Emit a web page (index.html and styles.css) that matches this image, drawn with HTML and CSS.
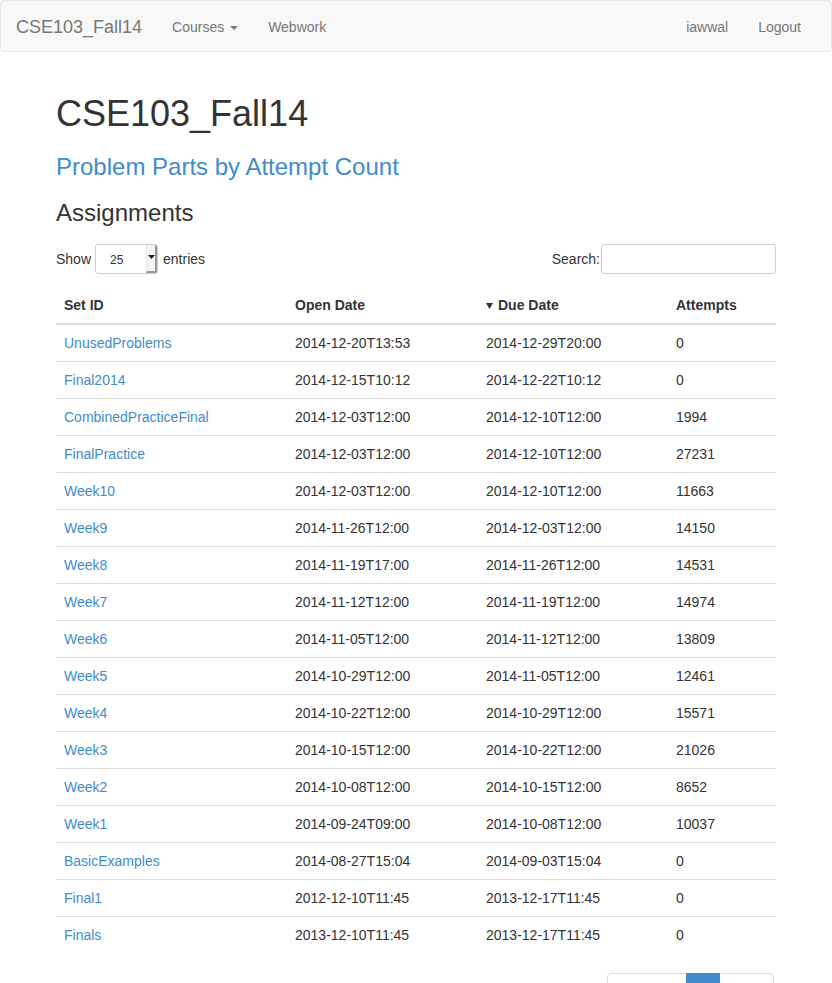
FILE: index.html
```
<!DOCTYPE html>
<html>
<head>
<meta charset="utf-8">
<title>CSE103_Fall14</title>
<link rel="stylesheet" href="styles.css">
</head>
<body>
<nav class="navbar">
  <div class="nav-left">
    <a class="brand" href="#">CSE103_Fall14</a>
    <a class="nav-link" href="#">Courses <span class="caret"></span></a>
    <a class="nav-link" href="#">Webwork</a>
  </div>
  <div class="nav-right">
    <a class="nav-link" href="#">iawwal</a>
    <a class="nav-link" href="#">Logout</a>
  </div>
</nav>
<main class="container">
  <h1>CSE103_Fall14</h1>
  <h3 class="subtitle">Problem Parts by Attempt Count</h3>
  <h3>Assignments</h3>
  <div class="tools">
    <div class="length">Show <span class="select"><span class="select-val">25</span><span class="select-arrow"><svg width="7" height="4" viewBox="0 0 7 4"><path d="M0 0H7L3.5 4Z" fill="#222"/></svg></span></span> entries</div>
    <div class="search">Search:<span class="input"></span></div>
  </div>
  <table class="table">
    <thead>
      <tr><th class="c1">Set ID</th><th class="c2">Open Date</th><th class="c3"><svg class="sort" width="7" height="6" viewBox="0 0 7 6"><path d="M0 0H7L3.5 6Z" fill="#333"/></svg>Due Date</th><th class="c4">Attempts</th></tr>
    </thead>
    <tbody>
      <tr><td><a href="#">UnusedProblems</a></td><td>2014-12-20T13:53</td><td>2014-12-29T20:00</td><td>0</td></tr>
      <tr><td><a href="#">Final2014</a></td><td>2014-12-15T10:12</td><td>2014-12-22T10:12</td><td>0</td></tr>
      <tr><td><a href="#">CombinedPracticeFinal</a></td><td>2014-12-03T12:00</td><td>2014-12-10T12:00</td><td>1994</td></tr>
      <tr><td><a href="#">FinalPractice</a></td><td>2014-12-03T12:00</td><td>2014-12-10T12:00</td><td>27231</td></tr>
      <tr><td><a href="#">Week10</a></td><td>2014-12-03T12:00</td><td>2014-12-10T12:00</td><td>11663</td></tr>
      <tr><td><a href="#">Week9</a></td><td>2014-11-26T12:00</td><td>2014-12-03T12:00</td><td>14150</td></tr>
      <tr><td><a href="#">Week8</a></td><td>2014-11-19T17:00</td><td>2014-11-26T12:00</td><td>14531</td></tr>
      <tr><td><a href="#">Week7</a></td><td>2014-11-12T12:00</td><td>2014-11-19T12:00</td><td>14974</td></tr>
      <tr><td><a href="#">Week6</a></td><td>2014-11-05T12:00</td><td>2014-11-12T12:00</td><td>13809</td></tr>
      <tr><td><a href="#">Week5</a></td><td>2014-10-29T12:00</td><td>2014-11-05T12:00</td><td>12461</td></tr>
      <tr><td><a href="#">Week4</a></td><td>2014-10-22T12:00</td><td>2014-10-29T12:00</td><td>15571</td></tr>
      <tr><td><a href="#">Week3</a></td><td>2014-10-15T12:00</td><td>2014-10-22T12:00</td><td>21026</td></tr>
      <tr><td><a href="#">Week2</a></td><td>2014-10-08T12:00</td><td>2014-10-15T12:00</td><td>8652</td></tr>
      <tr><td><a href="#">Week1</a></td><td>2014-09-24T09:00</td><td>2014-10-08T12:00</td><td>10037</td></tr>
      <tr><td><a href="#">BasicExamples</a></td><td>2014-08-27T15:04</td><td>2014-09-03T15:04</td><td>0</td></tr>
      <tr><td><a href="#">Final1</a></td><td>2012-12-10T11:45</td><td>2013-12-17T11:45</td><td>0</td></tr>
      <tr><td><a href="#">Finals</a></td><td>2013-12-10T11:45</td><td>2013-12-17T11:45</td><td>0</td></tr>
    </tbody>
  </table>
  <div class="footer-row">
    <div class="info">Showing 1 to 17 of 17 entries</div>
    <ul class="pagination">
      <li class="disabled"><a href="#">Previous</a></li>
      <li class="active"><a href="#">1</a></li>
      <li class="disabled"><a href="#">Next</a></li>
    </ul>
  </div>
</main>
</body>
</html>
```

FILE: styles.css
```
* { box-sizing: border-box; }
html, body { margin: 0; padding: 0; }
body {
  font-family: "Liberation Sans", Arial, sans-serif;
  font-size: 14px;
  line-height: 20px;
  color: #333;
  background: #fff;
}
a { color: #428bca; text-decoration: none; }

.navbar {
  height: 52px;
  background: #f8f8f8;
  border: 1px solid #e7e7e7;
  border-radius: 4px;
  display: flex;
  justify-content: space-between;
  align-items: stretch;
  margin-bottom: 20px;
}
.nav-left, .nav-right { display: flex; align-items: stretch; }
.brand {
  font-size: 18px;
  line-height: 20px;
  color: #777;
  padding: 16px 15px 14px;
}
.nav-link {
  color: #777;
  padding: 16px 15px 14px;
  line-height: 20px;
}
.nav-right { margin-right: 15px; }
.caret {
  display: inline-block;
  width: 0; height: 0;
  margin-left: 2px;
  vertical-align: middle;
  border-top: 4px solid #777;
  border-left: 4px solid transparent;
  border-right: 4px solid transparent;
}

.container {
  width: 750px;
  margin: 0 auto;
  padding: 2px 15px 0;
}
h1 {
  font-size: 36px;
  font-weight: 500;
  line-height: 1.1;
  margin: 20px 0 10px;
}
h3 {
  font-size: 24px;
  font-weight: 500;
  line-height: 1.1;
  margin: 20px 0 10px;
}
.subtitle { color: #428bca; }

.tools {
  display: flex;
  justify-content: space-between;
  align-items: center;
  padding-top: 8px;
  height: 38px;
}
.length { display: flex; align-items: center; }
.select {
  display: inline-flex;
  width: 63px;
  height: 30px;
  margin: 0 5px 0 4px;
  border: 1px solid #ccc;
  border-radius: 3px;
  background: #fff;
  position: relative;
  overflow: hidden;
}
.select-val {
  flex: 1;
  font-size: 12px;
  padding-left: 14px;
  line-height: 30px;
  color: #333;
}
.select-arrow {
  width: 11px;
  display: flex;
  align-items: center;
  justify-content: center;
  border-right: 2px solid #999;
  border-bottom: 2px solid #999;
  background: #f4f4f4;
  border-left: 1px solid #e8e8e8;
  padding-bottom: 2px;
}
.search { display: flex; align-items: center; }
.input {
  display: inline-block;
  width: 175px;
  height: 30px;
  border: 1px solid #ccc;
  border-radius: 3px;
  margin-left: 1px;
}

.table {
  width: 720px;
  border-collapse: separate;
  border-spacing: 0;
  margin-top: 13px;
  table-layout: fixed;
}
.table th {
  text-align: left;
  font-weight: bold;
  padding: 8px;
  line-height: 20px;
  border-bottom: 2px solid #ddd;
}
.table td {
  padding: 8px;
  line-height: 20px;
  border-bottom: 1px solid #ddd;
}
.table tbody tr:last-child td { border-bottom: 0; }
.c1 { width: 231px; }
.c2 { width: 191px; }
.c3 { width: 190px; }
.c4 { width: 108px; }
.sort { margin: 0 5px 0 0; vertical-align: 1px; }

.footer-row {
  display: flex;
  justify-content: space-between;
  align-items: flex-start;
}
.info { padding-top: 36px; }
.pagination {
  list-style: none;
  display: flex;
  margin: 20px 2px 20px 0;
  padding: 0;
}
.pagination li a {
  display: block;
  padding: 6px 12px;
  line-height: 20px;
  border: 1px solid #ddd;
  margin-left: -1px;
  color: #999;
  background: #fff;
}
.pagination li:first-child a { border-radius: 4px 0 0 4px; margin-left: 0; }
.pagination li:last-child a { border-radius: 0 4px 4px 0; }
.pagination li.active a {
  background: #428bca;
  border-color: #428bca;
  color: #fff;
  position: relative;
}
```
